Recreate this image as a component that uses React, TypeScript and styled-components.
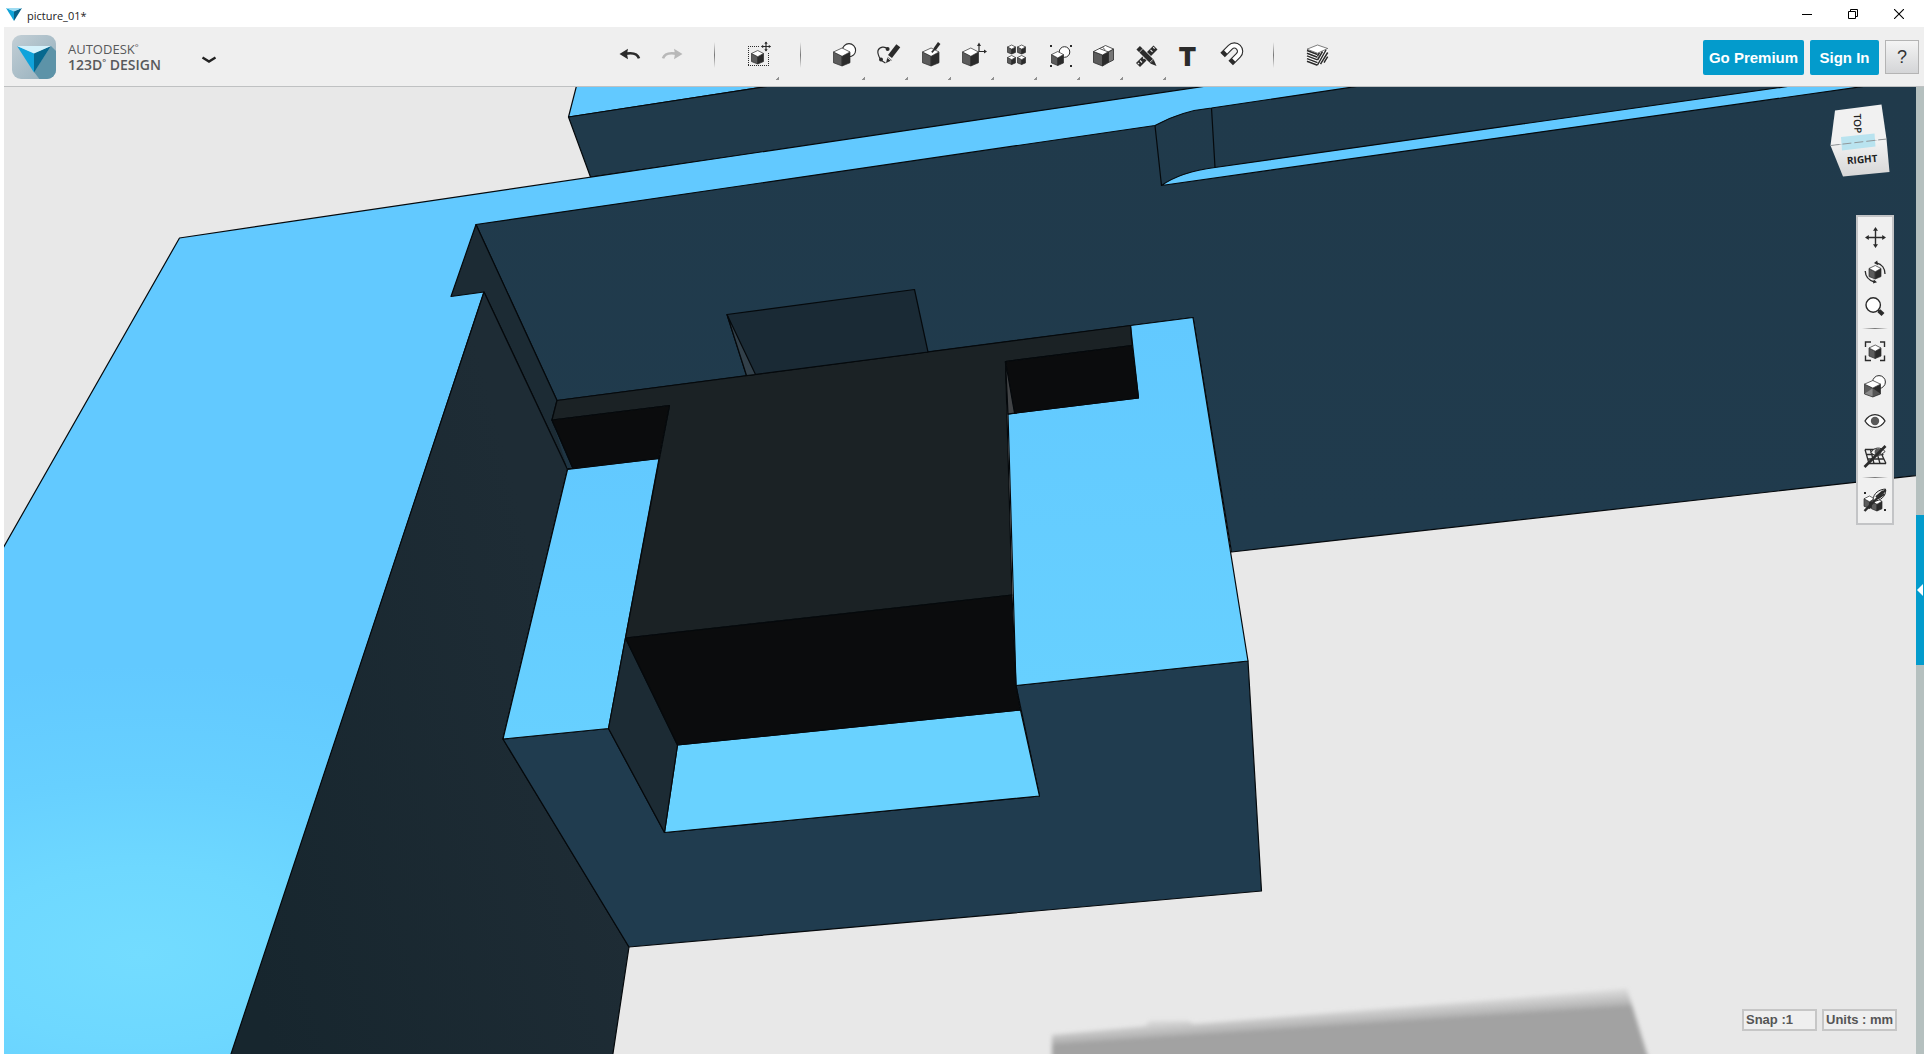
import React from "react";
import styled, { createGlobalStyle } from "styled-components";

const GlobalStyle = createGlobalStyle`
  *, *::before, *::after { box-sizing: border-box; }
  html, body { margin: 0; padding: 0; background: #ffffff; overflow: hidden; }
  button { font: inherit; color: inherit; background: none; border: 0; padding: 0; margin: 0; cursor: pointer; }
  svg { display: block; }
`;

const ui = `"Open Sans", "Noto Sans", sans-serif`;
const arial = `"Liberation Sans", Arial, sans-serif`;

const AppWindow = styled.div`
  display: flex;
  flex-direction: column;
  height: 100vh;
  background: #ffffff;
  font-family: ${arial};
`;

const TitleBar = styled.header`
  display: flex;
  align-items: center;
  flex: none;
  height: 27px;
  padding: 0 6px;
  color: #222222;
`;

const WindowTitle = styled.h1`
  flex: 1;
  margin: 0;
  padding: 4px 0 0 5px;
  font: 400 11px/16px ${ui};
`;

const WindowButton = styled.button`
  display: flex;
  align-items: center;
  justify-content: center;
  width: 46px;
  height: 27px;
`;

const Frame = styled.div`
  display: flex;
  flex-direction: column;
  flex: 1;
  min-height: 0;
  padding: 0 4px 4px;
`;

const Toolbar = styled.div`
  display: flex;
  justify-content: space-between;
  flex: none;
  height: 60px;
  background: #efefef;
  border-bottom: 1px solid #bfc1c2;
`;

const Brand = styled.div`
  display: flex;
  align-items: center;
  padding-left: 8px;
`;

const BrandName = styled.div`
  width: 120px;
  padding-left: 12px;
  color: #58595b;
`;

const BrandLine = styled.div<{ $strong?: boolean }>`
  display: flex;
  font: ${(p) => (p.$strong ? "600 14px" : "400 13px")} / 15px ${ui};
  white-space: pre;
`;

const Mark = styled.span`
  font-size: 9px;
  line-height: 12px;
`;

const MenuButton = styled.button`
  display: flex;
  align-items: center;
  justify-content: center;
  width: 66px;
  height: 48px;
  padding-top: 6px;
`;

const Tools = styled.nav`
  display: flex;
  padding-top: 1px;
`;

const ToolButton = styled.button<{ $menu?: boolean }>`
  position: relative;
  display: flex;
  align-items: center;
  justify-content: center;
  width: 43px;
  height: 52px;
  &::after {
    content: "";
    display: ${(p) => (p.$menu ? "block" : "none")};
    position: absolute;
    right: 0;
    bottom: 0;
    width: 3px;
    height: 3px;
    background: linear-gradient(135deg, transparent 40%, #909090 40%);
  }
`;

const TextGlyph = styled.span`
  padding-top: 5px;
  font: 900 26px/28px Inter, sans-serif;
  color: #2b2b2b;
`;

const ToolDivider = styled.div`
  width: 43px;
  height: 52px;
  padding: 14px 21px 12px;
  &::before {
    content: "";
    display: block;
    height: 26px;
    background: linear-gradient(#efefef, #777777 50%, #efefef);
  }
`;

const Account = styled.div`
  display: flex;
  gap: 6px;
  padding: 13px 5px 0 0;
`;

const AccountButton = styled.button<{ $wide?: boolean }>`
  width: ${(p) => (p.$wide ? "101px" : "69px")};
  height: 35px;
  border-radius: 2px;
  background: #039bcc;
  color: #ffffff;
  font: 700 15px/33px ${arial};
  white-space: nowrap;
`;

const HelpButton = styled.button`
  width: 34px;
  height: 34px;
  border: 1px solid #b4b4b4;
  background: linear-gradient(#f4f4f4, #d4d5d7);
  color: #333333;
  font: 400 18px/30px ${arial};
`;

const Workspace = styled.main`
  display: flex;
  flex: 1;
  min-height: 0;
`;

const Viewport = styled.section`
  position: relative;
  flex: 1;
  min-width: 0;
  overflow: hidden;
  background: #e8e8e8;
`;

const SceneCanvas = styled.svg`
  width: 100%;
  height: 100%;
`;

const CubeOverlay = styled.div`
  position: absolute;
  top: 16px;
  right: 24px;
`;

const NavPanel = styled.nav`
  position: absolute;
  top: 128px;
  right: 22px;
  display: flex;
  flex-direction: column;
  width: 38px;
  padding: 2px 0 6px;
  border: 2px solid #c3c4c6;
  background: #f0f0f0;
`;

const NavButton = styled.button`
  display: flex;
  align-items: center;
  justify-content: center;
  height: 35px;
`;

const NavDivider = styled.div`
  height: 9px;
  padding: 4px;
  &::before {
    content: "";
    display: block;
    height: 1px;
    background: linear-gradient(90deg, #f0f0f0, #777777 50%, #f0f0f0);
  }
`;

const Status = styled.div`
  position: absolute;
  right: 19px;
  bottom: 23px;
  display: flex;
  gap: 5px;
`;

const StatusButton = styled.button`
  width: 75px;
  height: 22px;
  padding-left: 2px;
  border: 2px solid #c6c6c6;
  background: #efefef;
  color: #555555;
  font: 700 13px/18px ${arial};
  text-align: left;
  white-space: nowrap;
`;

const Rail = styled.aside`
  display: flex;
  align-items: center;
  flex: none;
  width: 8px;
  padding-top: 39px;
  background: #b5c0bf;
`;

const RailTab = styled.button`
  display: flex;
  align-items: center;
  justify-content: center;
  width: 8px;
  height: 150px;
  background: #039bcc;
`;

const INK = "#2b2b2b";

function Cube({ x, y, w, h, left = "#5c5c5c", right = INK }: { x: number; y: number; w: number; h: number; left?: string; right?: string }) {
  const m = x + w * 0.52;
  const t = y + h * 0.22;
  const c = y + h * 0.46;
  const s = y + h * 0.82;
  return (
    <g stroke={INK} strokeWidth={0.7} strokeLinejoin="round">
      <path d={`M${x} ${t}L${m} ${c}V${y + h}L${x} ${s}Z`} fill={left} />
      <path d={`M${x + w} ${t}L${m} ${c}V${y + h}L${x + w} ${s}Z`} fill={right} />
      <path d={`M${x} ${t}L${m} ${y}L${x + w} ${t}L${m} ${c}Z`} fill="#ffffff" />
    </g>
  );
}

function Icon({ children }: { children: React.ReactNode }) {
  return (
    <svg width="28" height="28" viewBox="0 0 28 28" fill="none" stroke={INK} aria-hidden="true">
      {children}
    </svg>
  );
}

const undoShape = (color: string) => (
  <>
    <path d="M4.5 14L13 8.8L12 14L13 19.2Z" fill={color} stroke="none" />
    <path d="M11 13.6C17 12.6 22.5 13.4 24 18.4" stroke={color} strokeWidth="2.6" />
  </>
);

const UndoIcon = () => <Icon>{undoShape(INK)}</Icon>;
const RedoIcon = () => (
  <Icon>
    <g transform="translate(29 0) scale(-1 1)">{undoShape("#b8b8b8")}</g>
  </Icon>
);

const SelectIcon = () => (
  <Icon>
    <path d="M4 6H15M4 6V26M4 25.5H25M24.5 13V26" strokeWidth="1" strokeDasharray="1 1" shapeRendering="crispEdges" />
    <Cube x={7.5} y={10.5} w={12} h={13.5} />
    <path d="M22 2V11M17.5 6.5H26.5" strokeWidth="1.2" />
    <path d="M20.3 3.7L22 1.6L23.7 3.7ZM20.3 9.3L22 11.4L23.7 9.3ZM19.2 4.8L17.1 6.5L19.2 8.2ZM24.8 4.8L26.9 6.5L24.8 8.2Z" fill={INK} stroke="none" />
  </Icon>
);

const PrimitivesIcon = () => (
  <Icon>
    <circle cx="19" cy="10.2" r="6.6" fill="#ffffff" strokeWidth="1.1" />
    <Cube x={3.5} y={8} w={16.5} h={18} />
  </Icon>
);

const SketchIcon = () => (
  <Icon>
    <path d="M14.5 9C12 6 6.5 6.5 5 10.5C4.2 14 5.5 16 7.5 19.2C9 21.5 11 22 12.5 23" strokeWidth="1.2" />
    <circle cx="14.6" cy="9" r="2" fill={INK} stroke="none" />
    <circle cx="8" cy="19.5" r="2" fill={INK} stroke="none" />
    <path d="M17 16.5L25.3 5.8" strokeWidth="5" />
    <path d="M13 23L14.5 16.8L18.8 20.2Z" fill={INK} stroke="none" />
    <path d="M13.8 17.2L18 20.6" stroke="#efefef" strokeWidth="0.9" />
  </Icon>
);

const ConstructIcon = () => (
  <Icon>
    <Cube x={6.5} y={8} w={16.5} h={18} />
    <path d="M23.2 3L18.6 9.4" strokeWidth="3" />
    <path d="M18.8 9L15.8 12.4" strokeWidth="1.6" />
  </Icon>
);

const ModifyIcon = () => (
  <Icon>
    <Cube x={3.5} y={8} w={16} h={18} />
    <path d="M20 5V11.5H26" strokeWidth="1.2" />
    <path d="M18 6L20 2.6L22 6ZM25 9.4L28 11.5L25 13.6Z" fill={INK} stroke="none" />
  </Icon>
);

const PatternIcon = () => (
  <Icon>
    <Cube x={5.5} y={5} w={8} h={9} />
    <Cube x={15.5} y={5} w={8} h={9} />
    <Cube x={5.5} y={15.5} w={8} h={9} />
    <Cube x={15.5} y={15.5} w={8} h={9} />
  </Icon>
);

const GroupIcon = () => (
  <Icon>
    <path d="M5 5H7V7H5ZM25 5H27V7H25ZM5 25H7V27H5ZM25 25H27V27H25Z" fill={INK} stroke="none" />
    <circle cx="19.5" cy="12" r="5.3" fill="#ffffff" />
    <Cube x={6.5} y={11.5} w={12} h={14} />
  </Icon>
);

const CombineIcon = () => (
  <Icon>
    <g strokeWidth="0.8" strokeLinejoin="round">
      <path d="M5.5 11.5L14.5 15V26L5.5 22.5Z" fill="#5c5c5c" />
      <path d="M14.5 15L20.5 12V22.5L14.5 26Z" fill={INK} />
      <path d="M20.5 12L25.5 9V20L20.5 22.5Z" fill="#777777" />
      <path d="M5.5 11.5L17.5 5.5L25.5 9L14.5 15Z" fill="#ffffff" />
      <path d="M11.5 8.5L20.5 12M14.5 7L17 9.8" />
    </g>
  </Icon>
);

const MeasureIcon = () => (
  <Icon>
    <path d="M7 25L24.5 7.5" strokeWidth="5.6" />
    <path d="M9 20.5L11 22.5M12 17.5L13.4 18.9M19.5 9.8L21.5 11.8M22.2 7.2L23.6 8.6M6.8 22.8L8.2 24.2" stroke="#efefef" strokeWidth="1.1" />
    <path d="M7.2 7.8L21.5 22" strokeWidth="6.4" stroke="#efefef" />
    <path d="M7.2 7.8L21 21.6" strokeWidth="5" />
    <path d="M19.2 23.4L22.8 19.8L25.5 26Z" fill={INK} stroke="none" />
    <path d="M8.2 12.4L11.8 8.8M18.9 22.3L21.9 19.3" stroke="#efefef" strokeWidth="0.8" />
  </Icon>
);

const TextIcon = () => <TextGlyph>T</TextGlyph>;

const SnapIcon = () => (
  <Icon>
    <g transform="translate(-1 0)">
      <path d="M6.6 14.9L14.3 7.2A5.7 5.7 0 0 1 22.4 15.3L14.7 23" strokeWidth="6.4" />
      <path d="M9.6 11.9L14.3 7.2A5.7 5.7 0 0 1 22.4 15.3L17.7 20" strokeWidth="4.2" stroke="#ffffff" />
    </g>
  </Icon>
);

const MaterialIcon = () => (
  <Icon>
    <path d="M4 10L14.5 13.8L24.7 9V20.5L14.5 26L4 21.5Z" fill="#ffffff" stroke="none" />
    <path d="M4 10.5L14.5 14.5M4 13.2L14.5 17.2M4 15.9L14.5 19.9M4 18.6L14.5 22.6M4 21.3L14.5 25.3" strokeWidth="1.5" />
    <path d="M14.5 20L19.5 11.5M14.5 25L23 10M17.5 24.2L24.7 12.5M21 22.6L24.7 16.6M14.5 16L16.5 12.6" strokeWidth="1.5" />
    <path d="M4 9.2L14.5 5L24.7 8.5L14.5 13.2Z" fill="#ffffff" strokeWidth="0.6" />
  </Icon>
);

const PanIcon = () => (
  <Icon>
    <path d="M14.5 6V23M6 14.5H23" strokeWidth="1.4" />
    <path d="M12 7.8L14.5 4L17 7.8ZM12 21.2L14.5 25L17 21.2ZM7.8 12L4 14.5L7.8 17ZM21.2 12L25 14.5L21.2 17Z" fill={INK} stroke="none" />
  </Icon>
);

const OrbitIcon = () => (
  <Icon>
    <Cube x={8} y={7.5} w={12} h={13.5} />
    <path d="M4.2 13C4.5 18.5 8 22.5 13.5 24M24 16C24 10.5 21 6 15.5 5" strokeWidth="1.3" />
    <path d="M12.8 21.5L16 24.3L12 25.6ZM16.2 2.6L13 5L17 7.2Z" fill={INK} stroke="none" />
  </Icon>
);

const ZoomIcon = () => (
  <Icon>
    <circle cx="12.2" cy="12" r="7.2" fill="#ffffff" strokeWidth="1.4" />
    <path d="M17 17L19 19" strokeWidth="2" />
    <path d="M17.9 17.7L22 21.6" strokeWidth="4.2" />
  </Icon>
);

const FitIcon = () => (
  <Icon>
    <path d="M4.5 10V5H10M19 5H23.5V10M23.5 18.5V23.5H19M10 23.5H4.5V18.5" strokeWidth="1.4" />
    <Cube x={8} y={8} w={12} h={13.5} />
  </Icon>
);

const ShadingIcon = () => (
  <Icon>
    <circle cx="18" cy="10" r="6.4" fill="#ffffff" strokeWidth="1" />
    <Cube x={3.5} y={8.5} w={16} h={16.5} />
    <path d="M3.8 21.5L11.8 16.2V24.6Z" fill="#8a8a8a" stroke="none" />
    <path d="M11.8 16.2L19.2 21.5L11.8 24.8Z" fill="#555555" stroke="none" />
  </Icon>
);

const EyeIcon = () => (
  <Icon>
    <path d="M4 14C9 5.5 19 5.5 24 14C19 22.5 9 22.5 4 14Z" fill="#ffffff" strokeWidth="1.3" />
    <circle cx="14" cy="14" r="4.2" fill="#5a5a5a" stroke="none" />
  </Icon>
);

const GridIcon = () => (
  <Icon>
    <path d="M4 7.5H21M5.5 12.5H22.5M6.5 17H23M8 21.5H25M4 7.5L8 21.5M9.5 7.5L13 21.5M15 7.5L19 21.5M20 11L25 21.5" strokeWidth="1.3" />
    <path d="M10 10.5C13 5 20 4.5 24 9.5C20 14.5 13 14.5 10 10.5Z" fill="#f0f0f0" strokeWidth="1" />
    <circle cx="17" cy="10" r="3.4" fill="#5a5a5a" stroke="none" />
    <path d="M3.5 25L24.5 4" strokeWidth="2.6" />
  </Icon>
);

const MaterialOffIcon = () => (
  <Icon>
    <Cube x={3} y={10} w={10.5} h={12.5} />
    <Cube x={10.5} y={12.5} w={10.5} h={12.5} />
    <path d="M12 14C12.5 7 18 3.5 24.5 3C25.5 8 22 13.5 15 15Z" fill="#f0f0f0" strokeWidth="1" />
    <path d="M15 11L22 5M17 12.5L23.5 8" strokeWidth="1.8" />
    <path d="M3.5 25L24.5 4" strokeWidth="2.4" />
    <path d="M3 6H5V8H3ZM23 23H25V25H23Z" fill={INK} stroke="none" />
  </Icon>
);

type Tool = { label: string; icon?: React.ComponentType; menu?: boolean };

const tools: Tool[] = [
  { label: "Undo", icon: UndoIcon },
  { label: "Redo", icon: RedoIcon },
  { label: "divider-1" },
  { label: "Transform", icon: SelectIcon, menu: true },
  { label: "divider-2" },
  { label: "Primitives", icon: PrimitivesIcon, menu: true },
  { label: "Sketch", icon: SketchIcon, menu: true },
  { label: "Construct", icon: ConstructIcon, menu: true },
  { label: "Modify", icon: ModifyIcon, menu: true },
  { label: "Pattern", icon: PatternIcon, menu: true },
  { label: "Grouping", icon: GroupIcon, menu: true },
  { label: "Combine", icon: CombineIcon, menu: true },
  { label: "Measure", icon: MeasureIcon, menu: true },
  { label: "Text", icon: TextIcon },
  { label: "Snap", icon: SnapIcon },
  { label: "divider-3" },
  { label: "Material", icon: MaterialIcon },
];

const navTools: Tool[] = [
  { label: "Pan", icon: PanIcon },
  { label: "Orbit", icon: OrbitIcon },
  { label: "Zoom", icon: ZoomIcon },
  { label: "divider-1" },
  { label: "Fit", icon: FitIcon },
  { label: "Shading", icon: ShadingIcon },
  { label: "Visibility", icon: EyeIcon },
  { label: "Hide grid", icon: GridIcon },
  { label: "divider-2" },
  { label: "Hide materials", icon: MaterialOffIcon },
];

function Scene() {
  return (
    <SceneCanvas viewBox="4 87 1912 967" preserveAspectRatio="xMinYMin slice" role="img" aria-label="3D model">
      <defs>
        <radialGradient id="shine" gradientUnits="userSpaceOnUse" cx="0" cy="0" r="1" gradientTransform="translate(140 955) scale(560 290)">
          <stop offset="0" stopColor="#73dcff" />
          <stop offset="0.3" stopColor="#6ed8ff" />
          <stop offset="0.6" stopColor="#67d0ff" />
          <stop offset="1" stopColor="#62c9ff" />
        </radialGradient>
        <linearGradient id="topFace" x1="0" y1="0" x2="0" y2="1">
          <stop offset="0" stopColor="#62c9ff" />
          <stop offset="1" stopColor="#67d0ff" />
        </linearGradient>
        <linearGradient id="sideFace" gradientUnits="userSpaceOnUse" x1="230" y1="900" x2="600" y2="800">
          <stop offset="0" stopColor="#17262e" />
          <stop offset="1" stopColor="#1e2c35" />
        </linearGradient>
        <linearGradient id="frontFace" gradientUnits="userSpaceOnUse" x1="900" y1="100" x2="900" y2="950">
          <stop offset="0" stopColor="#203a4b" />
          <stop offset="1" stopColor="#203c4f" />
        </linearGradient>
        <linearGradient id="shadowFade" gradientUnits="userSpaceOnUse" x1="1337" y1="1011" x2="1338" y2="1026">
          <stop offset="0" stopColor="#a2a2a2" stopOpacity="0.25" />
          <stop offset="0.9" stopColor="#a2a2a2" stopOpacity="0.8" />
          <stop offset="1" stopColor="#a2a2a2" />
        </linearGradient>
        <filter id="soft" x="-5%" y="-20%" width="110%" height="140%">
          <feGaussianBlur stdDeviation="2" />
        </filter>
      </defs>

      <path d="M1052 1035L1145 1026L1150 1021H1188L1194 1024L1627 989L1652 1070H1052Z" fill="url(#shadowFade)" filter="url(#soft)" />

      <g stroke="#05090c" strokeWidth="1.2" strokeLinejoin="round">
        <path d="M578 80L568.5 117L809 80Z" fill="#62c9ff" />
        <path d="M568.5 117L809 80H1260L590.5 177Z" fill="#203a4b" />
        <path d="M179.5 238L1247 80H1400L1930 60V300L484 292L230 1060H-2V557Z" fill="url(#shine)" />
        <path d="M476 224.5L1155 125.5C1172 116 1190 110 1211.5 108L1400 80H1930V474L1231.5 552L1193 317.5L557 400.5Z" fill="url(#frontFace)" />
        <path d="M1161.5 185.5C1175 176 1195 170 1215 167.5L1833 80H1909Z" fill="#62c9ff" />
        <path d="M1155 125.5L1161.5 185.5M1211.5 108L1215 167.5" fill="none" />

        <path d="M476 224.5L451 296.5L484 292L567.5 469.5H573L552 420L557 400.5Z" fill="#1c2b34" />
        <path d="M484 292L567.5 469.5L503 739L629 947L612 1060H229Z" fill="url(#sideFace)" />
        <path d="M552 420L573 468.5H567.5" fill="#1f3543" />

        <path d="M503 739L608.5 728.5L664.5 832.5L1039.5 796L1016 685.5L1248 661L1261.5 891L629 947Z" fill="#203c4f" />
        <path d="M567.5 469.5L659 458.5L608.5 728.5L503 739Z" fill="url(#topFace)" />
        <path d="M1130.5 325.5L1193 317.5L1248 661L1016 685.5L1008 414L1138.5 398Z" fill="url(#topFace)" />
        <path d="M677.5 745L1020.5 710L1039.5 796L664.5 832.5Z" fill="#69d2ff" />
        <path d="M608.5 728.5L625.5 638L677.5 745L664.5 832.5Z" fill="#1c2b34" />

        <path d="M557 400.5L1130.5 325.5L1132 345.5L1005.5 361.5L1012 595L625.5 638L669.5 405.5L552 420Z" fill="#1b2225" />
        <path d="M552 420L669.5 405.5L659 458.5L573 468.5Z" fill="#0b0c0d" />
        <path d="M1005.5 361.5L1132 345.5L1138.5 398L1008 414Z" fill="#0b0c0d" />
        <path d="M1005.5 361.5L1014.5 413L1008 414Z" fill="#414345" />
        <path d="M625.5 638L1012 595L1016 685.5L1020.5 710L677.5 745Z" fill="#0b0c0d" />

        <path d="M727 314.5L914.5 289.5L928 352L746.5 375.5Z" fill="#1a2a35" />
        <path d="M727 314.5L755.5 374.5L746.5 375.5Z" fill="#32404a" />
      </g>
    </SceneCanvas>
  );
}

function ViewCube() {
  return (
    <svg width="64" height="80" viewBox="1828 103 64 80" role="img" aria-label="View cube">
      <defs>
        <linearGradient id="cubeSide" x1="0" y1="0" x2="0" y2="1">
          <stop offset="0" stopColor="#f4f4f4" />
          <stop offset="1" stopColor="#d6d6d6" />
        </linearGradient>
      </defs>
      <path d="M1835 110.5L1881.5 104.5L1886.5 139L1830.5 145.5Z" fill="#f1f1f1" />
      <path d="M1830.5 145.5L1886.5 139L1889.5 172L1843 176.5Z" fill="url(#cubeSide)" />
      <path d="M1841 137L1874.5 133.5L1875.5 146.5L1842 150.5Z" fill="#b9e3ef" />
      <path d="M1830.5 145.5L1886.5 139" stroke="#8b8f91" strokeWidth="0.9" strokeDasharray="9 3" />
      <g fontFamily="Open Sans, sans-serif" fill="#222222" textAnchor="middle">
        <text transform="translate(1854 123.5) rotate(88)" fontSize="10" fontWeight="600">TOP</text>
        <text transform="translate(1862.5 163) rotate(-5)" fontSize="10" fontWeight="700">RIGHT</text>
      </g>
    </svg>
  );
}

const TitleMark = () => (
  <svg width="16" height="14" viewBox="0 0 16 14" aria-hidden="true">
    <path d="M0 1L8 4V14Z" fill="#10a3d8" />
    <path d="M16 1L8 4V14Z" fill="#075f86" />
    <path d="M0 1L16 1L8 4.5Z" fill="#9fdcf2" />
  </svg>
);

const BrandMark = () => (
  <svg width="44" height="44" viewBox="0 0 44 44" aria-hidden="true">
    <defs>
      <linearGradient id="tile" x1="0" y1="0" x2="1" y2="1">
        <stop offset="0" stopColor="#c3cfd6" />
        <stop offset="1" stopColor="#93aebb" />
      </linearGradient>
      <clipPath id="tileClip">
        <rect width="44" height="44" rx="9" />
      </clipPath>
    </defs>
    <g clipPath="url(#tileClip)">
      <rect width="44" height="44" fill="url(#tile)" />
      <path d="M39 11L50 22V50H32L22 37Z" fill="#5d93a8" />
      <path d="M5 11L22 18V37.5Z" fill="#10a3db" />
      <path d="M39 11L22 18V37.5Z" fill="#06688f" />
      <path d="M5 11H39L22 18.5Z" fill="#d4f1fb" />
    </g>
  </svg>
);

export default function App() {
  return (
    <AppWindow>
      <GlobalStyle />
      <TitleBar>
        <TitleMark />
        <WindowTitle>picture_01*</WindowTitle>
        <WindowButton aria-label="Minimize">
          <svg width="10" height="10" viewBox="0 0 10 10"><path d="M0 5.5H10" stroke="#000" /></svg>
        </WindowButton>
        <WindowButton aria-label="Restore">
          <svg width="10" height="10" viewBox="0 0 10 10" fill="none" stroke="#000"><path d="M.5 2.5H7.5V9.5H.5ZM2.5 2.5V.5H9.5V7.5H7.5" /></svg>
        </WindowButton>
        <WindowButton aria-label="Close">
          <svg width="10" height="10" viewBox="0 0 10 10"><path d="M0 0L10 10M10 0L0 10" stroke="#000" strokeWidth="1.1" /></svg>
        </WindowButton>
      </TitleBar>
      <Frame>
        <Toolbar>
          <Brand>
            <BrandMark />
            <BrandName>
              <BrandLine>AUTODESK<Mark>°</Mark></BrandLine>
              <BrandLine $strong>123D<Mark>°</Mark> DESIGN</BrandLine>
            </BrandName>
            <MenuButton aria-label="Main menu">
              <svg width="16" height="8" viewBox="0 0 16 8" fill="none"><path d="M1.5 1.5L8 5.5L14.5 1.5" stroke="#222" strokeWidth="2.4" /></svg>
            </MenuButton>
          </Brand>
          <Tools aria-label="Tools">
            {tools.map(({ label, icon: Glyph, menu }) =>
              Glyph ? (
                <ToolButton key={label} aria-label={label} $menu={menu}><Glyph /></ToolButton>
              ) : (
                <ToolDivider key={label} />
              )
            )}
          </Tools>
          <Account>
            <AccountButton $wide>Go Premium</AccountButton>
            <AccountButton>Sign In</AccountButton>
            <HelpButton>?</HelpButton>
          </Account>
        </Toolbar>
        <Workspace>
          <Viewport>
            <Scene />
            <CubeOverlay><ViewCube /></CubeOverlay>
            <NavPanel aria-label="Navigation">
              {navTools.map(({ label, icon: Glyph }) =>
                Glyph ? <NavButton key={label} aria-label={label}><Glyph /></NavButton> : <NavDivider key={label} />
              )}
            </NavPanel>
            <Status>
              <StatusButton>Snap :1</StatusButton>
              <StatusButton>Units : mm</StatusButton>
            </Status>
          </Viewport>
          <Rail>
            <RailTab aria-label="Open parts panel">
              <svg width="6" height="12" viewBox="0 0 6 12"><path d="M0 6L6 0V12Z" fill="#fff" /></svg>
            </RailTab>
          </Rail>
        </Workspace>
      </Frame>
    </AppWindow>
  );
}
